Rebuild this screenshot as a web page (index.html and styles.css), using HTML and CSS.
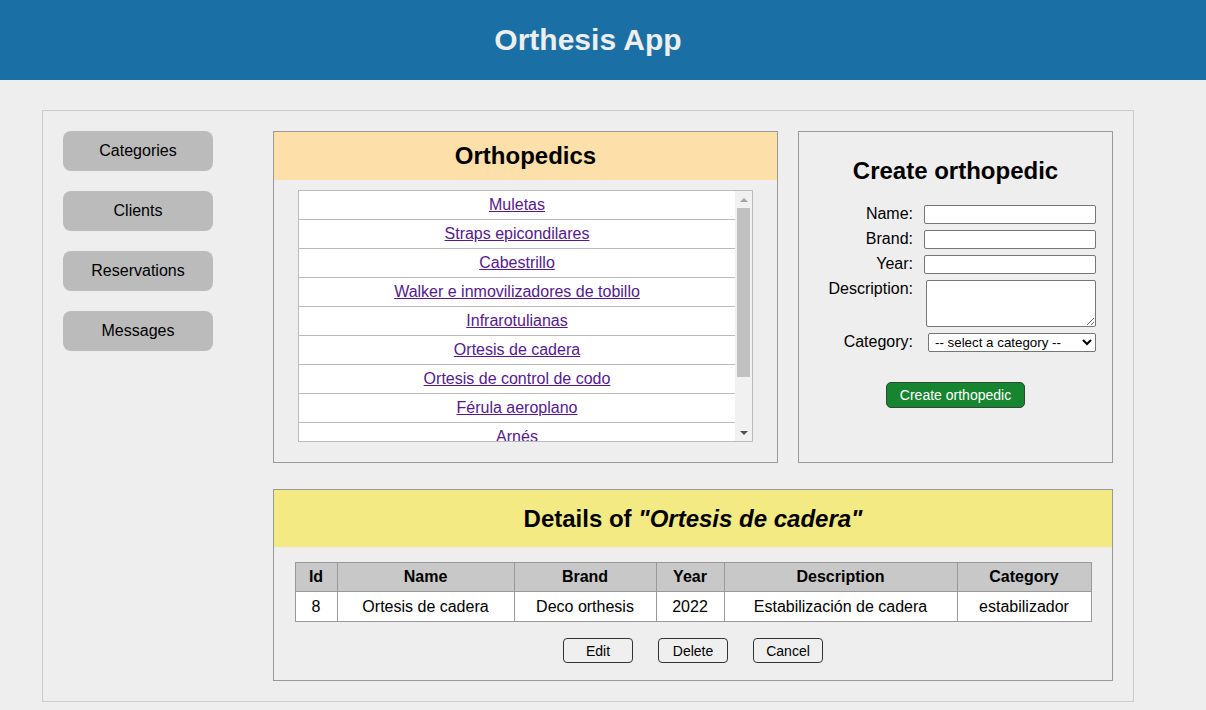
FILE: index.html
```html
<!DOCTYPE html>
<html lang="en">
<head>
<meta charset="utf-8">
<title>Orthesis App</title>
<link rel="stylesheet" href="styles.css">
</head>
<body>
<header class="app-header">
  <div class="app-header-inner"><h1 class="app-title">Orthesis App</h1></div>
</header>
<main class="page">
  <div class="container">
    <nav class="sidebar">
      <button class="nav-btn">Categories</button>
      <button class="nav-btn">Clients</button>
      <button class="nav-btn">Reservations</button>
      <button class="nav-btn">Messages</button>
    </nav>
    <div class="content">
      <section class="panel list-panel">
        <div class="panel-head head-orange"><h2 class="panel-title">Orthopedics</h2></div>
        <div class="listbox">
          <ul class="items">
            <li class="item"><a href="#">Muletas</a></li>
            <li class="item"><a href="#">Straps epicondilares</a></li>
            <li class="item"><a href="#">Cabestrillo</a></li>
            <li class="item"><a href="#">Walker e inmovilizadores de tobillo</a></li>
            <li class="item"><a href="#">Infrarotulianas</a></li>
            <li class="item"><a href="#">Ortesis de cadera</a></li>
            <li class="item"><a href="#">Ortesis de control de codo</a></li>
            <li class="item"><a href="#">Férula aeroplano</a></li>
            <li class="item"><a href="#">Arnés</a></li>
          </ul>
          <div class="scrollbar">
            <div class="sb-btn"><span class="arrow-up"></span></div>
            <div class="sb-track"><div class="sb-thumb"></div></div>
            <div class="sb-btn"><span class="arrow-down"></span></div>
          </div>
        </div>
      </section>
      <section class="panel create-panel">
        <h2 class="create-title">Create orthopedic</h2>
        <form class="create-form">
          <label class="lbl" for="f-name">Name:</label>
          <input class="ctl" id="f-name" type="text">
          <label class="lbl" for="f-brand">Brand:</label>
          <input class="ctl" id="f-brand" type="text">
          <label class="lbl" for="f-year">Year:</label>
          <input class="ctl" id="f-year" type="text">
          <label class="lbl lbl-top" for="f-desc">Description:</label>
          <textarea class="ctl area" id="f-desc"></textarea>
          <label class="lbl" for="f-cat">Category:</label>
          <select class="ctl sel" id="f-cat"><option>-- select a category --</option></select>
        </form>
        <div class="create-actions"><button class="create-btn" type="button">Create orthopedic</button></div>
      </section>
      <section class="panel details-panel">
        <div class="panel-head head-yellow"><h2 class="panel-title">Details of <em>"Ortesis de cadera"</em></h2></div>
        <table class="details">
          <thead>
            <tr><th class="c-id">Id</th><th class="c-name">Name</th><th class="c-brand">Brand</th><th class="c-year">Year</th><th class="c-desc">Description</th><th class="c-cat">Category</th></tr>
          </thead>
          <tbody>
            <tr><td>8</td><td>Ortesis de cadera</td><td>Deco orthesis</td><td>2022</td><td>Estabilización de cadera</td><td>estabilizador</td></tr>
          </tbody>
        </table>
        <div class="actions">
          <button class="act-btn">Edit</button>
          <button class="act-btn">Delete</button>
          <button class="act-btn">Cancel</button>
        </div>
      </section>
    </div>
  </div>
</main>
</body>
</html>
```

FILE: styles.css
```css
* { box-sizing: border-box; }
html, body { margin: 0; padding: 0; }
body {
  background: #eeeeee;
  font-family: Arial, "Liberation Sans", sans-serif;
  color: #000;
  width: 1206px;
  height: 710px;
  overflow: hidden;
}
.app-header {
  height: 80px;
  background: #1a6fa5;
}
.app-header-inner {
  width: 1176px;
  height: 80px;
  display: flex;
  align-items: center;
  justify-content: center;
}
.app-title {
  margin: 0;
  color: #eeeeee;
  font-size: 30px;
  font-weight: bold;
  line-height: 34px;
}
.page {
  width: 1176px;
  padding: 30px 42px 0 42px;
}
.container {
  border: 1px solid #cccccc;
  padding: 20px;
  display: flex;
  align-items: flex-start;
}
.sidebar {
  width: 150px;
  margin-right: 60px;
  display: flex;
  flex-direction: column;
  gap: 20px;
}
.nav-btn {
  height: 40px;
  border: none;
  border-radius: 8px;
  background: #bbbbbb;
  font-family: Arial, "Liberation Sans", sans-serif;
  font-size: 16px;
  color: #000;
  padding: 0;
}
.content {
  display: grid;
  grid-template-columns: 505px 315px;
  column-gap: 20px;
  row-gap: 26px;
}
.panel {
  border: 1px solid #999999;
}
.panel-head {
  display: flex;
  align-items: center;
  justify-content: center;
}
.head-orange { background: #fddfa9; height: 48px; }
.head-yellow { background: #f3ea83; height: 57px; }
.panel-title {
  margin: 0;
  font-size: 24px;
  font-weight: bold;
  line-height: 28px;
}
.list-panel {
  height: 332px;
  padding-bottom: 20px;
}
.listbox {
  margin: 10px 24px 0 24px;
  height: 252px;
  border: 1px solid #bbbbbb;
  background: #ffffff;
  display: flex;
  overflow: hidden;
}
.items {
  list-style: none;
  margin: 0;
  padding: 0;
  flex: 1;
  overflow: hidden;
}
.item {
  height: 29px;
  line-height: 28px;
  border-bottom: 1px solid #bbbbbb;
  text-align: center;
  font-size: 16px;
}
.item a { color: #551a8b; }
.scrollbar {
  width: 17px;
  background: #f1f1f1;
  display: flex;
  flex-direction: column;
}
.sb-btn {
  height: 17px;
  display: flex;
  align-items: center;
  justify-content: center;
}
.arrow-up {
  width: 0; height: 0;
  border-left: 4px solid transparent;
  border-right: 4px solid transparent;
  border-bottom: 4px solid #a3a3a3;
}
.arrow-down {
  width: 0; height: 0;
  border-left: 4px solid transparent;
  border-right: 4px solid transparent;
  border-top: 4px solid #505050;
}
.sb-track {
  flex: 1;
  padding: 0 2px;
}
.sb-thumb {
  height: 169px;
  background: #c1c1c1;
}
.create-panel {
  padding-top: 25px;
}
.create-title {
  margin: 0;
  text-align: center;
  font-size: 24px;
  font-weight: bold;
  line-height: 28px;
}
.create-form {
  margin-top: 20px;
  padding-right: 16px;
  display: grid;
  grid-template-columns: auto 172px;
  justify-content: end;
  column-gap: 11px;
  row-gap: 6px;
  align-items: center;
}
.lbl {
  font-size: 16px;
  text-align: right;
  line-height: 18px;
  margin-top: -2px;
}
.lbl-top { align-self: start; margin-top: 0; }
.ctl {
  height: 19px;
  border: 1px solid #767676;
  border-radius: 2px;
  background: #ffffff;
  padding: 0 2px;
  font-family: Arial, "Liberation Sans", sans-serif;
  font-size: 13px;
  width: 172px;
}
.area {
  height: 47px;
  width: 170px;
  margin-left: 2px;
  resize: vertical;
}
.sel {
  width: 168px;
  margin-left: 4px;
  padding: 0 0 0 2px;
  color: #000;
  font-size: 13.33px;
}
.create-actions {
  margin-top: 30px;
  display: flex;
  justify-content: center;
}
.create-btn {
  width: 139px;
  height: 26px;
  background: #17842f;
  color: #ffffff;
  border: 1px solid #2b4a33;
  border-radius: 5px;
  font-family: Arial, "Liberation Sans", sans-serif;
  font-size: 14px;
  padding: 0;
}
.details-panel {
  grid-column: 1 / 3;
  padding-bottom: 17px;
}
.details-panel em { font-style: italic; }
.details {
  margin: 15px auto 0 auto;
  width: 796px;
  border-collapse: collapse;
  font-size: 16px;
  table-layout: fixed;
}
.details th, .details td {
  border: 1px solid #999999;
  text-align: center;
  padding: 0;
}
.details th {
  background: #c8c8c8;
  height: 29px;
  font-weight: bold;
}
.details td {
  background: #ffffff;
  height: 30px;
}
.c-id { width: 42px; }
.c-name { width: 177px; }
.c-brand { width: 142px; }
.c-year { width: 68px; }
.c-desc { width: 233px; }
.c-cat { width: 134px; }
.actions {
  margin-top: 16px;
  display: flex;
  justify-content: center;
  gap: 25px;
}
.act-btn {
  width: 70px;
  height: 25px;
  border: 1px solid #333333;
  border-radius: 4px;
  background: #efefef;
  font-family: Arial, "Liberation Sans", sans-serif;
  font-size: 14px;
  color: #000;
  padding: 0;
}
```
